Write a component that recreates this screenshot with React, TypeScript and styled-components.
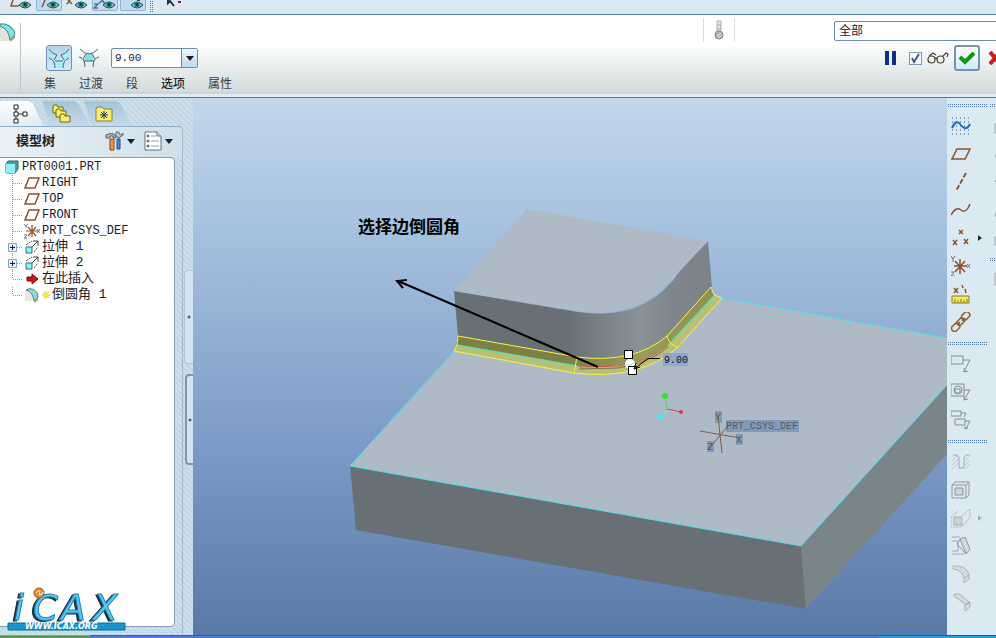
import React from 'react';
import styled, { createGlobalStyle } from 'styled-components';

const GlobalStyle = createGlobalStyle`
  * { box-sizing: border-box; }
  html, body { margin: 0; padding: 0; }
  body {
    overflow: hidden;
    font-family: "Liberation Sans", "Noto Sans CJK SC", sans-serif;
    font-size: 12px;
    color: #1b2126;
  }
  button, input, select { font: inherit; color: inherit; }
  svg { display: block; flex: none; }
`;

const hatch = 'repeating-linear-gradient(45deg, #cddfeb 0, #cddfeb 2px, #c3d7e5 2px, #c3d7e5 4px)';

const dots = `linear-gradient(#dbe9f3 1px, transparent 1px) 0 0 / 2px 2px,
  linear-gradient(90deg, #4f78a6 1px, #dbe9f3 1px) 0 0 / 2px 2px`;

const Page = styled.div`
  display: flex;
  flex-direction: column;
  height: 100vh;
  overflow: hidden;
  background: #dae8f2;
`;

const ViewBar = styled.header`
  flex: none;
  display: flex;
  height: 15px;
  padding-left: 8px;
  gap: 2px;
  overflow: hidden;
  background: #dbe9f3;
  border-bottom: 1px solid #567a9b;
`;

const ViewToggle = styled.button<{ $on?: boolean }>`
  width: 26px;
  height: 11px;
  padding: 0;
  border: 1px solid ${p => (p.$on ? '#93b2cc' : 'transparent')};
  border-top: 0;
  border-radius: 0 0 2px 2px;
  background: ${p => (p.$on ? '#bddcf2' : 'transparent')};
`;

const Grip = styled.span`
  width: 4px;
  height: 12px;
  margin: 0 10px 0 2px;
  background: ${dots};
`;

const Dashboard = styled.section`
  flex: none;
  display: flex;
  height: 83px;
  overflow: hidden;
  background: linear-gradient(#ffffff 0, #ffffff 36%, #e9eeee 62%, #d3dbdb 94%, #bfcbd2 95%, #dfeaf2 97%);
  border-bottom: 1px solid #567a9b;
`;

const FeatureMark = styled.div`
  width: 21px;
  height: 68px;
  margin-top: 8px;
  border-right: 1px solid #b9c3c8;
`;

const Controls = styled.div`
  display: flex;
  flex-direction: column;
  padding: 30px 0 0 23px;
  gap: 5px;
`;

const ControlRow = styled.div`
  display: flex;
  align-items: center;
  gap: 4px;
  padding-left: 2px;
`;

const TabRow = styled.div`
  display: flex;
  gap: 23px;
`;

const FilterRow = styled.div`
  display: flex;
  align-items: center;
`;

const ModeButton = styled.button<{ $on?: boolean }>`
  display: grid;
  place-items: center;
  width: 26px;
  height: 26px;
  padding: 0;
  border-radius: 3px;
  border: 1px solid ${p => (p.$on ? '#6f93b2' : 'transparent')};
  background: ${p => (p.$on ? 'linear-gradient(#b8d4e8, #cfe9fb)' : 'transparent')};
`;

const Combo = styled.div`
  display: flex;
  width: 87px;
  height: 20px;
  margin-left: 5px;
  border: 1px solid #6b8fab;
  border-radius: 2px;
  background: #fff;
  overflow: hidden;
`;

const ComboInput = styled.input`
  flex: 1;
  min-width: 0;
  padding: 0 3px;
  border: 0;
  background: none;
  font-family: "Liberation Mono", monospace;
  font-size: 11px;
  outline: none;
`;

const ComboArrow = styled.button`
  display: grid;
  place-items: center;
  width: 16px;
  padding: 0;
  border: 0;
  border-left: 1px solid #6b8fab;
  background: linear-gradient(#eef7fd, #bfdaee);
`;

const TabText = styled.button<{ $strong?: boolean }>`
  padding: 0;
  border: 0;
  background: none;
  line-height: 16px;
  color: ${p => (p.$strong ? '#000' : '#3a3f44')};
`;

const DashRight = styled.div`
  display: flex;
  flex-direction: column;
  width: 293px;
  margin-left: auto;
  padding-top: 3px;
`;

const Status = styled.div`
  display: grid;
  place-items: center;
  width: 32px;
  height: 24px;
  border-left: 1px solid #dcdcdc;
  border-right: 1px solid #dcdcdc;
`;

const FilterSelect = styled.select`
  flex: 1;
  height: 20px;
  margin: 2px -6px 0 99px;
  padding: 0 4px;
  border: 1px solid #6b8fab;
  border-radius: 2px;
  background: #fff;
  appearance: none;
`;

const Actions = styled.div`
  display: flex;
  align-items: center;
  justify-content: flex-end;
  gap: 5px;
  margin: 3px -7px 0 0;
`;

const PlainButton = styled.button`
  display: grid;
  place-items: center;
  padding: 0;
  border: 0;
  background: none;
`;

const Preview = styled.label`
  display: flex;
  align-items: center;
  gap: 5px;
  margin-left: 7px;
`;

const Tick = styled.input`
  appearance: none;
  width: 13px;
  height: 13px;
  margin: 0;
  border: 1px solid #7d9bb5;
  background: #f4f8fb;
  &:checked {
    background: #f4f8fb url("data:image/svg+xml,%3Csvg xmlns='http://www.w3.org/2000/svg' viewBox='0 0 11 11'%3E%3Cpath d='M2 5l2 4L9 1' fill='none' stroke='%23405f80' stroke-width='2'/%3E%3C/svg%3E");
  }
`;

const AcceptButton = styled.button`
  display: grid;
  place-items: center;
  width: 26px;
  height: 26px;
  padding: 0;
  border: 2px solid #7396ae;
  border-radius: 3px;
  background: linear-gradient(#ffffff, #cfeafc);
`;

const Main = styled.main`
  flex: 1;
  display: flex;
  min-height: 0;
`;

const Sidebar = styled.aside`
  position: relative;
  flex: none;
  display: flex;
  flex-direction: column;
  width: 193px;
  background: ${hatch};
`;

const SideTabs = styled.nav`
  display: flex;
  height: 28px;
  padding-top: 3px;
`;

const SideTab = styled.button<{ $on?: boolean }>`
  display: grid;
  place-items: center;
  width: 48px;
  height: 25px;
  margin-right: -6px;
  padding: 0 8px 0 0;
  border: 0;
  background: ${p => (p.$on ? 'linear-gradient(#ffffff, #dfebf3)' : 'linear-gradient(#a4c3d8, #c6dae8)')};
  clip-path: ${p => (p.$on
    ? 'polygon(0 0, 58% 0, 68% 8%, 90% 100%, 0 100%)'
    : 'polygon(0 0, 66% 0, 75% 8%, 100% 100%, 17% 100%)')};
`;

const SideBody = styled.div`
  flex: 1;
  display: flex;
  min-height: 0;
`;

const Panel = styled.div`
  flex: 1;
  display: flex;
  flex-direction: column;
  border-top: 1px solid #8fb0c6;
  border-right: 1px solid #9dbace;
  border-radius: 0 5px 0 0;
  background: linear-gradient(90deg, #e9f1f6, #cfe0eb) 0 0 / 100% 30px no-repeat;
`;

const PanelHead = styled.div`
  display: flex;
  align-items: center;
  height: 30px;
  padding: 0 9px 2px 16px;
`;

const PanelTitle = styled.h2`
  flex: 1;
  margin: 0;
  font-size: 13px;
  line-height: 16px;
`;

const MenuButton = styled.button`
  display: flex;
  align-items: center;
  gap: 3px;
  margin-left: 9px;
  padding: 0;
  border: 0;
  background: none;
`;

const Tree = styled.ul`
  flex: 1;
  margin: 0 7px 8px 0;
  padding: 1px 0 0;
  list-style: none;
  background: #fff;
  border: 1px solid #7d9fb8;
  border-left: 0;
  border-radius: 0 5px 5px 0;
`;

const TreeRow = styled.li<{ $root?: boolean }>`
  display: flex;
  align-items: center;
  gap: 2px;
  height: 16px;
  padding-left: ${p => (p.$root ? 4 : 0)}px;
  white-space: pre;
`;

const TreeLabel = styled.span<{ $cjk?: boolean }>`
  font-family: "Liberation Mono", "Noto Sans CJK SC", monospace;
  font-size: ${p => (p.$cjk ? 13 : 12)}px;
  line-height: 16px;
`;

const Sashes = styled.div`
  display: flex;
  flex-direction: column;
  align-items: flex-end;
  gap: 10px;
  width: 10px;
  padding-top: 144px;
`;

const Sash = styled.button<{ $dark?: boolean }>`
  display: grid;
  place-items: center;
  width: ${p => (p.$dark ? 8 : 9)}px;
  height: ${p => (p.$dark ? 91 : 94)}px;
  padding: 0;
  border: ${p => (p.$dark ? 2 : 1)}px solid ${p => (p.$dark ? '#8795a1' : '#b1c6d6')};
  border-right: 0;
  border-radius: 4px 0 0 4px;
  background: #d3e3ef;
`;

const Watermark = styled.div`
  position: absolute;
  left: 5px;
  bottom: 2px;
`;

const Viewport = styled.div`
  flex: 1;
  min-width: 0;
  background: linear-gradient(#c2d7ea, #a6c1df 25%, #7f9dc8 62%, #5a79a6);
`;

const Scene = styled.svg`
  width: 100%;
  height: 100%;
`;

const Tools = styled.aside`
  flex: none;
  display: flex;
  width: 49px;
  overflow: hidden;
  background: #dbe9f3;
`;

const ToolColumn = styled.div`
  flex: none;
  width: 42px;
  padding-left: 1px;
`;

const DotRule = styled.div`
  height: 4px;
  margin: 5px 1px 5px 0;
  background: ${dots};
`;

const Tool = styled.button`
  display: flex;
  align-items: center;
  gap: 6px;
  width: 40px;
  height: 28px;
  padding: 0 0 0 3px;
  border: 0;
  background: none;
`;

const Taskbar = styled.footer`
  flex: none;
  display: flex;
  height: 3px;
`;

const TaskPart = styled.div<{ $kind: 'start' | 'bar' | 'tray' }>`
  flex: ${p => (p.$kind === 'start' ? '0 0 90px' : p.$kind === 'tray' ? '0 0 117px' : '1')};
  background: ${p => (p.$kind === 'start' ? '#4aa43c' : p.$kind === 'tray' ? '#19a5ee' : '#3f80e6')};
  border-top: 1px solid ${p => (p.$kind === 'start' ? '#77a98c' : p.$kind === 'tray' ? '#0c66b4' : '#2a5fc9')};
`;

/* ---- small drawings ---- */

const Down = () => (
  <svg width="8" height="5" viewBox="0 0 8 5"><path d="M0 0h8L4 5z" fill="#17212c" /></svg>
);

const EyeIcon = ({ mark, color }: { mark: string; color: string }) => (
  <svg width="24" height="10" viewBox="0 0 24 10">
    <path d={mark} fill="none" stroke={color} strokeWidth="1.5" />
    <path d="M10 5q6-6 12 0-6 6-12 0z" fill="#8fc3bd" stroke="#31454e" />
    <circle cx="16" cy="4.5" r="2.8" fill="#1d8173" />
    <circle cx="16" cy="4.5" r="1.2" fill="#062b28" />
  </svg>
);

const FilletBig = () => (
  <svg width="16" height="20" viewBox="0 0 16 20">
    <path d="M0 3q9 0 11 15H0z" fill="#e6e1d6" />
    <path d="M0 1h5q9 3 10 10l-5 6Q9 6 0 3z" fill="#7fe6e3" stroke="#2e8685" />
    <path d="M10 17l5-6v4l-5 4z" fill="#a89f8f" />
  </svg>
);

const SetsIcon = () => (
  <svg width="22" height="20" viewBox="0 0 22 20">
    <path d="M1 2q3 4 7 5l-2 6q-2-2-5-3zM21 2q-3 4-7 5l2 6q2-2 5-3zM7 13h8v7H7z" fill="#a6eef4" />
    <path d="M1 1q3 5 8 6M21 1q-3 5-8 6M1 10q6 2 6 10M21 10q-6 2-6 10M7 13h8M9 7l-3 5M13 7l3 5" fill="none" stroke="#45677b" />
  </svg>
);

const TransIcon = () => (
  <svg width="22" height="20" viewBox="0 0 22 20">
    <path d="M8 6h6l2 7H6z" fill="#7fe3e3" />
    <path d="M2 1q9 10 18 0M1 9q6 1 6 10M21 9q-6 1-6 10M6 13h10M8 6l-3 5M14 6l3 5" fill="none" stroke="#566169" />
  </svg>
);

const Thermo = () => (
  <svg width="12" height="20" viewBox="0 0 12 20">
    <path d="M4 1h4v12H4z" fill="#e2e2e2" stroke="#b0b0b0" />
    <path d="M4 5h4M4 9h4" stroke="#b0b0b0" />
    <circle cx="6" cy="15" r="4" fill="#b4b4b4" stroke="#858585" />
    <path d="M4 16l4-3M5 18l4-3" stroke="#e3e3e3" />
  </svg>
);

const PauseIcon = () => (
  <svg width="13" height="14" viewBox="0 0 13 14"><path d="M1 0h4v14H1zM8 0h4v14H8z" fill="#0b2f8f" /></svg>
);

const Glasses = () => (
  <svg width="22" height="12" viewBox="0 0 22 12">
    <g fill="none" stroke="#4a4034" strokeWidth="1.2">
      <circle cx="4.5" cy="7.5" r="3.5" /><circle cx="13.5" cy="7.5" r="3.5" />
      <path d="M8 7q1-2 2 0M2 4l4-3 3 2M16 4l3-3 2 1-1 3" />
    </g>
  </svg>
);

const CheckIcon = () => (
  <svg width="18" height="14" viewBox="0 0 18 14"><path d="M2 6l5 5L16 2" fill="none" stroke="#0f9a12" strokeWidth="4" /></svg>
);

const CrossIcon = () => (
  <svg width="18" height="14" viewBox="0 0 18 14"><path d="M5 1l10 12M15 1L5 13" stroke="#c5201c" strokeWidth="4" /></svg>
);

const TreeTabIcon = () => (
  <svg width="15" height="20" viewBox="0 0 15 20">
    <path d="M3 4v12M5 10h5" stroke="#333" />
    <path d="M1 1h4v4H1zM1 8h4v4H1zM1 15h4v4H1zM10 8h4v4h-4z" fill="#fff" stroke="#222" />
  </svg>
);

const FoldersIcon = () => (
  <svg width="20" height="20" viewBox="0 0 20 20">
    {[[1, 1], [4, 5], [8, 10]].map(([x, y]) => (
      <path key={x} transform={`translate(${x} ${y})`} d="M0 8V1l1-1h3l1 2h5v6z" fill="#f8ee62" stroke="#6e6419" />
    ))}
  </svg>
);

const FavIcon = () => (
  <svg width="18" height="16" viewBox="0 0 18 16">
    <path d="M1 15V3l1-2h5l2 2h8v12z" fill="#f9ef60" stroke="#8b8033" />
    <path d="M9 5v8M5 9h8M6 6l6 6M12 6l-6 6" stroke="#1e347e" />
  </svg>
);

const HammerIcon = () => (
  <svg width="19" height="20" viewBox="0 0 19 20">
    <path d="M1 7V4q6-3 9 0l1 3H8V5H5v2z" fill="#b2b5b5" stroke="#5d6464" />
    <path d="M5 8h4v11H5z" fill="#ef9447" stroke="#8c4718" />
    <path d="M11 1v4l3 2 4-3v-2l-2 2-2-1V1z" fill="#c4ced4" stroke="#5d6464" />
    <path d="M12 8h3v10h-3z" fill="#4e8cd0" stroke="#274d8a" />
  </svg>
);

const ListIcon = () => (
  <svg width="18" height="20" viewBox="0 0 18 20">
    <path d="M1 1h12l4 4v14H1z" fill="#fff" stroke="#5a7081" />
    <path d="M13 1v4h4" fill="#d5e1e9" stroke="#5a7081" />
    <path d="M7 5h5M7 10h8M7 15h8" stroke="#8b9bab" />
    <g fill="#fff" stroke="#33475a"><circle cx="4" cy="5" r="1" /><circle cx="4" cy="10" r="1" /><circle cx="4" cy="15" r="1" /></g>
  </svg>
);

const PartIcon = () => (
  <svg width="16" height="14" viewBox="0 0 16 14">
    <path d="M2 4l2-3h10v8l-3 4H2z" fill="#44a3a6" stroke="#24676b" />
    <path d="M2 4h9v9H2z" fill="#8ff3f1" />
  </svg>
);

const PlaneIcon = () => (
  <svg width="16" height="12" viewBox="0 0 16 12"><path d="M5 1h10l-4 10H1z" fill="none" stroke="#8d5230" strokeWidth="1.5" /></svg>
);

const CsysIcon = () => (
  <svg width="16" height="16" viewBox="0 0 16 16">
    <path d="M8 2v12M2 8h12M4 4l8 9M12 4l-8 9" stroke="#8d5230" strokeWidth="1.2" />
    <path d="M0 1l2 2 2-2M2 3v2M13 6l3 4M16 6l-3 4M0 12h3l-3 3h3" fill="none" stroke="#6a6f73" />
  </svg>
);

const ExtrudeIcon = () => (
  <svg width="16" height="16" viewBox="0 0 16 16">
    <path d="M2 8h6v6H2z" fill="#8df0f0" stroke="#2c7276" />
    <path d="M2 6l6-4M10 13l4-5" stroke="#39474f" strokeDasharray="2 1" />
    <path d="M8 8l6-6M9 2h5v5" fill="none" stroke="#39474f" />
  </svg>
);

const InsertIcon = () => (
  <svg width="16" height="14" viewBox="0 0 16 14"><path d="M3 5h5V2l6 5-6 5V9H3z" fill="#cf1717" stroke="#7a0c0c" /></svg>
);

const RoundIcon = () => (
  <svg width="16" height="16" viewBox="0 0 16 16">
    <path d="M1 4q8 0 8 10H1z" fill="#ece8df" />
    <path d="M2 3q3-2 6-1 6 2 6 8l-4 4Q9 5 2 3z" fill="#84dede" stroke="#547f80" />
    <path d="M10 14l4-4v3l-3 3z" fill="#a79c8b" />
  </svg>
);

const FreshMark = () => (
  <svg width="8" height="10" viewBox="0 0 8 10">
    <path d="M4 1v8M0 5h8M1 2l6 6M7 2L1 8" stroke="#d8c80a" />
    <circle cx="4" cy="5" r="2" fill="#f7ee2a" />
  </svg>
);

const Branch = ({ plus, last, gap }: { plus?: boolean; last?: boolean; gap?: boolean }) => (
  <svg width="22" height="16" viewBox="0 0 22 16">
    <path d={`M12.5 0v${last || gap ? 8 : 16}M13 8.5h9`} fill="none" stroke="#9a9a9a" strokeDasharray="1 1" />
    {plus && <><path d="M8.5 4.5h8v8h-8z" fill="#e5f1fa" stroke="#8fa9bf" /><path d="M10 8.5h5M12.5 6v5" stroke="#15202b" /></>}
  </svg>
);

const LogoArt = styled.svg`
  overflow: visible;
`;

const LogoLetters = styled.text`
  font: italic 36px "DejaVu Sans", sans-serif;
  fill: #5cc6ee;
  stroke: #1b86bd;
  filter: drop-shadow(-2px 1px 0 #1f2d36);
`;

const LogoUrl = styled.text`
  font: italic bold 8px "DejaVu Sans", sans-serif;
  fill: #ffffff;
`;

const Logo = () => (
  <LogoArt width="122" height="48" viewBox="0 0 122 48" role="img" aria-label="iCAX">
    <LogoLetters x="9 28 56 88" y="35">iCAX</LogoLetters>
    <circle cx="34" cy="8" r="5" fill="#f08a24" stroke="#a8520c" />
    <path d="M31 8q1-3 4-2l-1 4q4 0 4-3" fill="none" stroke="#fff" />
    <path d="M3 38h117v7H3z" fill="#1597cf" stroke="#0c6a9b" />
    <LogoUrl x="20" y="44">WWW.ICAX.ORG</LogoUrl>
  </LogoArt>
);

const B = '#8d5230';
const G = '#858e96';

const Glyph = ({ children }: { children: React.ReactNode }) => (
  <svg width="20" height="20" viewBox="0 0 20 20" fill="none">{children}</svg>
);

type ToolItem = { name: string; art: React.ReactNode; more?: boolean };

const datumTools: ToolItem[] = [
  { name: '草绘', art: <><path d="M1 2h18M1 6h18M1 10h18M1 14h18M1 18h18" stroke="#34577c" strokeDasharray="1 3" /><path d="M1 12q4-9 8-4t6 4q2 0 4-4" stroke="#1a6fc4" strokeWidth="2" /></> },
  { name: '平面', art: <path d="M6 5h13l-5 10H1z" stroke={B} strokeWidth="1.5" /> },
  { name: '轴', art: <path d="M15 1L5 19" stroke={B} strokeWidth="2" strokeDasharray="5 2" /> },
  { name: '曲线', art: <path d="M0 15q5-9 10-5t9-6" stroke={B} strokeWidth="1.5" /> },
  { name: '点', more: true, art: <path d="M8 2l4 4M12 2l-4 4M2 12l4 5M6 12l-4 5M13 11l4 5M17 11l-4 5" stroke={B} strokeWidth="1.5" /> },
  { name: '坐标系', art: <><path d="M9 3v15M3 10h13M4 5l10 11M14 5L4 16" stroke={B} strokeWidth="1.5" /><path d="M0 0l2 3 2-3M2 3v3M16 8l3 4M19 8l-3 4M0 16h3l-3 4h4" stroke="#6d757a" /></> },
  { name: '分析', art: <><path d="M3 4l4 5M7 4L3 9M11 1l1 3M14 5l1 4" stroke={B} strokeWidth="1.5" /><path d="M1 12h17v7H1z" fill="#f2e95e" stroke="#8b7c25" /><path d="M4 15v4M7 16v3M10 15v4M13 16v3M16 15v4" stroke="#8b7c25" /></> },
  { name: '参照', art: <g stroke="#8c6230" strokeWidth="1.5"><rect x="0" y="12" width="9" height="6" rx="3" transform="rotate(-45 5 15)" /><path d="M6 13l3-3M11 9l3-3" /><rect x="6" y="7" width="8" height="5" rx="2" transform="rotate(-45 10 10)" /><rect x="11" y="1" width="9" height="6" rx="3" transform="rotate(-45 15 5)" /></g> },
];

const noteTools: ToolItem[] = [
  { name: '注释', art: <path d="M0 2h12v8H0zM12 6h7l-6 12M13 14v4l4-1" stroke={G} /> },
  { name: '符号', art: <><path d="M0 2h13v12H0zM13 8h6l-6 10M13 14v4l4-1" stroke={G} /><circle cx="7" cy="8" r="4" stroke={G} /><path d="M4 7h5v4H4z" stroke={G} /></> },
  { name: '修饰', art: <path d="M0 1h10v5H0zM4 9h10v6H4zM10 3h5l-2 4M14 11h5l-4 8M14 16v3l3-1" stroke={G} /> },
];

const featureTools: ToolItem[] = [
  { name: '孔', art: <><path d="M2 3h4l2 3v10h5V6l2-3h4" stroke="#a3aab0" /><path d="M1 9l5-5M1 13l6-6M1 17l6-6M14 9l4-4M14 13l5-5M14 17l5-5" stroke="#c0c6ca" /></> },
  { name: '壳', art: <><path d="M1 5l3-3h14v13l-3 3H1zM1 5h14v13M15 5l3-3" stroke="#8f979d" /><path d="M4 8h8v7H4z" fill="#cdd4d8" stroke="#8f979d" /></> },
  { name: '筋', more: true, art: <><path d="M0 9v10h11" stroke="#a9b0b5" strokeDasharray="2 1" /><path d="M0 9l7-6M11 19l8-10V1l-8 7" stroke="#b9bfc4" /><path d="M3 9h8v8H3z" fill="#cbd2d6" stroke="#a9b0b5" /></> },
  { name: '拔模', art: <><path d="M1 5h6v10H1M1 1h8M1 18h12" stroke="#a3aab0" /><path d="M9 3l5-2 5 12-4 5z" fill="#d2d8dc" stroke="#8f979d" /><path d="M9 3l-3 5 9 10" stroke="#8f979d" /></> },
  { name: '倒圆角', art: <><path d="M2 2q14-1 16 9v4l-5 4Q14 6 2 5z" fill="#d4d9dc" stroke="#adb4b8" /><path d="M13 15l5-5" stroke="#adb4b8" /></> },
  { name: '倒角', art: <><path d="M3 2h6l10 9v4l-5 4v-7L3 4z" fill="#d4d9dc" stroke="#adb4b8" /><path d="M14 13l5-3" stroke="#8f979d" /></> },
];

const edgeTools = [
  'M2 8h9v9H2z', 'M8 4l7 8-7 5-6-5z', 'M8 3L2 9l6 6M2 9h12', 'M2 16q2-9 9-14M2 16h9', 'M2 17V9h6V5h9v12z',
];

const edgeTools2 = ['M2 3h12v12H2z', 'M9 2q-8 4 0 12', 'M4 16h12'];

const Column = ({ items }: { items: ToolItem[] }) => (
  <>
    {items.map(t => (
      <Tool key={t.name} aria-label={t.name}>
        <Glyph>{t.art}</Glyph>
        {t.more && <svg width="6" height="8" viewBox="0 0 6 8"><path d="M1 1l4 3-4 3z" fill={t.name === '点' ? '#222b33' : '#a4afb8'} /></svg>}
      </Tool>
    ))}
  </>
);

const Outlines = ({ paths }: { paths: string[] }) => (
  <>
    {paths.map(d => (
      <Tool key={d} tabIndex={-1} aria-hidden="true"><Glyph><path d={d} stroke="#a2acb4" /></Glyph></Tool>
    ))}
  </>
);

type TreeItem = { label: string; icon: React.ReactNode; plus?: boolean; cjk?: boolean; gap?: boolean; last?: boolean; fresh?: boolean };

const treeItems: TreeItem[] = [
  { label: 'RIGHT', icon: <PlaneIcon /> },
  { label: 'TOP', icon: <PlaneIcon /> },
  { label: 'FRONT', icon: <PlaneIcon /> },
  { label: 'PRT_CSYS_DEF', icon: <CsysIcon /> },
  { label: '拉伸 1', icon: <ExtrudeIcon />, plus: true, cjk: true },
  { label: '拉伸 2', icon: <ExtrudeIcon />, plus: true, cjk: true },
  { label: '在此插入', icon: <InsertIcon />, cjk: true, gap: true },
  { label: '倒圆角 1', icon: <RoundIcon />, cjk: true, last: true, fresh: true },
];

const Model = () => (
  <Scene viewBox="193 98 754 537" preserveAspectRatio="xMidYMid slice">
    <defs>
      <linearGradient id="wall" gradientUnits="userSpaceOnUse" x1="570" y1="0" x2="712" y2="0">
        <stop offset="0" stopColor="#697075" />
        <stop offset="0.25" stopColor="#7b8388" />
        <stop offset="0.5" stopColor="#8a9298" />
        <stop offset="0.7" stopColor="#80878c" />
        <stop offset="1" stopColor="#7c8388" />
      </linearGradient>
      <linearGradient id="band" gradientUnits="userSpaceOnUse" x1="570" y1="0" x2="712" y2="0">
        <stop offset="0" stopColor="#7f8045" />
        <stop offset="0.5" stopColor="#9a9c58" />
        <stop offset="1" stopColor="#8d9052" />
      </linearGradient>
    </defs>
    {/* base slab */}
    <path d="M350 466L455 351 722 298 947 338V385L801 546z" fill="#aebbc7" />
    <path d="M350 466L801 546 806 609 356 530z" fill="#687075" />
    <path d="M801 546L947 385V454L806 609z" fill="#7a8589" />
    <path d="M454 351L350 466 801 546 947 385M722 298L947 338" fill="none" stroke="#4fe0e6" />
    {/* upper boss */}
    <path d="M454 291L578 312Q646 322 680 271L708 241 712 287 667 336Q640 362 597 359L577 357 458 336z" fill="url(#wall)" />
    <path d="M454 291L527 209 708 241 680 269Q667 286 652 297 624 316 583 312z" fill="#aebbc6" />
    {/* round preview */}
    <path d="M458 336L577 357Q634 364 667 336L711 287 714 296 672 341Q640 372 577 366L456 345z" fill="url(#band)" />
    <path d="M456 345L577 366Q640 372 672 341L714 296 722 298 678 347Q640 381 574 373L454 351z" fill="#b9be78" />
    <path d="M456 345L577 366M672 341L714 296" stroke="#62dfa4" strokeWidth="1.5" />
    <path d="M458 336L577 357Q634 364 667 336L711 287M454 351L574 373Q640 381 678 347L722 298M458 336l-1 9-3 6M711 287l3 8 8 3M577 357l-3 16M667 336q2 9 11 11" fill="none" stroke="#f4f43c" />
    <path d="M579 367L618 366Q648 362 668 345" fill="none" stroke="#d5554a" />
    <path d="M579 369L618 368Q650 363 668 347" fill="none" stroke="#74705a" />
    {/* note with leader */}
    <text x="358" y="233" fontFamily="Noto Sans CJK SC, sans-serif" fontWeight="bold" fontSize="17" fill="#000">选择边倒圆角</text>
    <path d="M598 367L398 281M407 280l-10 1 6 7" fill="none" stroke="#000" strokeWidth="2" />
    {/* radius handles */}
    <path d="M624.5 350.5h8v8h-8z" fill="#fff" stroke="#000" />
    <circle cx="630" cy="364" r="5" fill="#fff" />
    <path d="M626 365q4 1 8-2" fill="none" stroke="#9adbe0" />
    <path d="M628.5 366.5h8v8h-8z" fill="#fff" stroke="#000" />
    <path d="M660 358.5H648L634 369M636 363l-2 6 6-2" fill="none" stroke="#000" />
    <rect x="663" y="353" width="25" height="13" fill="#91a7cb" />
    <text x="664" y="363" fontFamily="Liberation Mono, monospace" fontSize="10" fill="#0c1730">9.00</text>
    {/* spin centre */}
    <path d="M667 409l-2-13" stroke="#4ed94e" /><path d="M667 409l14 3" stroke="#cf4a50" /><path d="M667 409l-6 8" stroke="#6fdde0" />
    <circle cx="665" cy="396" r="3" fill="#36e336" /><circle cx="681" cy="412" r="2" fill="#dc3445" /><circle cx="660" cy="417" r="3" fill="#45ecf2" />
    {/* coordinate system */}
    <g fill="#8199bd">
      <rect x="715" y="411" width="7" height="12" /><rect x="736" y="434" width="7" height="11" /><rect x="707" y="441" width="7" height="11" />
      <rect x="726" y="420" width="73" height="12" />
    </g>
    <path d="M700 431L740 438M718 416L722 453M709 449L727 427" stroke="#7d5f41" />
    <g fontFamily="Liberation Mono, monospace" fontSize="10" fill="#5d5a58">
      <text x="726" y="429">PRT_CSYS_DEF</text>
      <text x="715" y="420">Y</text><text x="736" y="443">X</text><text x="707" y="450">Z</text>
    </g>
  </Scene>
);

export default function App() {
  return (
    <Page>
      <GlobalStyle />
      <ViewBar>
        <ViewToggle aria-label="平面显示"><EyeIcon mark="M4 0L2 6h8" color={B} /></ViewToggle>
        <ViewToggle $on aria-label="轴显示"><EyeIcon mark="M8 0L5 7" color={B} /></ViewToggle>
        <ViewToggle aria-label="点显示"><EyeIcon mark="M2 4l3-4M7 4L3 0" color={B} /></ViewToggle>
        <ViewToggle $on aria-label="坐标系显示"><EyeIcon mark="M1 4h4L1 8h4M5 4l5-4M9 0l3 4" color="#58748c" /></ViewToggle>
        <ViewToggle $on aria-label="注释显示"><EyeIcon mark="M16 0h3" color="#111" /></ViewToggle>
        <Grip />
        <svg width="18" height="10" viewBox="0 0 18 10">
          <path d="M2 0v3l2-2 4 5" fill="none" stroke="#26313a" strokeWidth="2" /><path d="M12 1h3v2h-3z" fill="#6c2380" />
        </svg>
      </ViewBar>

      <Dashboard>
        <FeatureMark><FilletBig /></FeatureMark>
        <Controls>
          <ControlRow>
            <ModeButton $on aria-label="集模式"><SetsIcon /></ModeButton>
            <ModeButton aria-label="过渡模式"><TransIcon /></ModeButton>
            <Combo>
              <ComboInput aria-label="半径" defaultValue="9.00" />
              <ComboArrow aria-label="半径列表"><Down /></ComboArrow>
            </Combo>
          </ControlRow>
          <TabRow>
            <TabText>集</TabText>
            <TabText>过渡</TabText>
            <TabText>段</TabText>
            <TabText $strong>选项</TabText>
            <TabText>属性</TabText>
          </TabRow>
        </Controls>
        <DashRight>
          <FilterRow>
            <Status><Thermo /></Status>
            <FilterSelect aria-label="过滤器"><option>全部</option></FilterSelect>
          </FilterRow>
          <Actions>
            <PlainButton aria-label="暂停"><PauseIcon /></PlainButton>
            <Preview><Tick type="checkbox" defaultChecked aria-label="预览" /><Glasses /></Preview>
            <AcceptButton aria-label="确定"><CheckIcon /></AcceptButton>
            <PlainButton aria-label="取消"><CrossIcon /></PlainButton>
          </Actions>
        </DashRight>
      </Dashboard>

      <Main>
        <Sidebar>
          <SideTabs>
            <SideTab $on aria-label="模型树"><TreeTabIcon /></SideTab>
            <SideTab aria-label="文件夹"><FoldersIcon /></SideTab>
            <SideTab aria-label="收藏夹"><FavIcon /></SideTab>
          </SideTabs>
          <SideBody>
            <Panel>
              <PanelHead>
                <PanelTitle>模型树</PanelTitle>
                <MenuButton aria-label="设置"><HammerIcon /><Down /></MenuButton>
                <MenuButton aria-label="显示"><ListIcon /><Down /></MenuButton>
              </PanelHead>
              <Tree>
                <TreeRow $root><PartIcon /><TreeLabel>PRT0001.PRT</TreeLabel></TreeRow>
                {treeItems.map(t => (
                  <TreeRow key={t.label}>
                    <Branch plus={t.plus} last={t.last} gap={t.gap} />
                    {t.icon}
                    {t.fresh && <FreshMark />}
                    <TreeLabel $cjk={t.cjk}>{t.label}</TreeLabel>
                  </TreeRow>
                ))}
              </Tree>
            </Panel>
            <Sashes>
              {[false, true].map(dark => (
                <Sash key={String(dark)} $dark={dark} aria-label={dark ? '折叠导航器' : '展开浏览器'}>
                  <svg width="4" height="4" viewBox="0 0 4 4"><circle cx="2" cy="2" r="1" fill="#fff" stroke="#26333e" /></svg>
                </Sash>
              ))}
            </Sashes>
          </SideBody>
          <Watermark><Logo /></Watermark>
        </Sidebar>

        <Viewport><Model /></Viewport>

        <Tools>
          <ToolColumn>
            <DotRule /><Column items={datumTools} />
            <DotRule /><Column items={noteTools} />
            <DotRule /><Column items={featureTools} />
          </ToolColumn>
          <ToolColumn>
            <DotRule /><Outlines paths={edgeTools} />
            <DotRule /><Outlines paths={edgeTools2} />
          </ToolColumn>
        </Tools>
      </Main>

      <Taskbar>
        <TaskPart $kind="start" /><TaskPart $kind="bar" /><TaskPart $kind="tray" />
      </Taskbar>
    </Page>
  );
}
